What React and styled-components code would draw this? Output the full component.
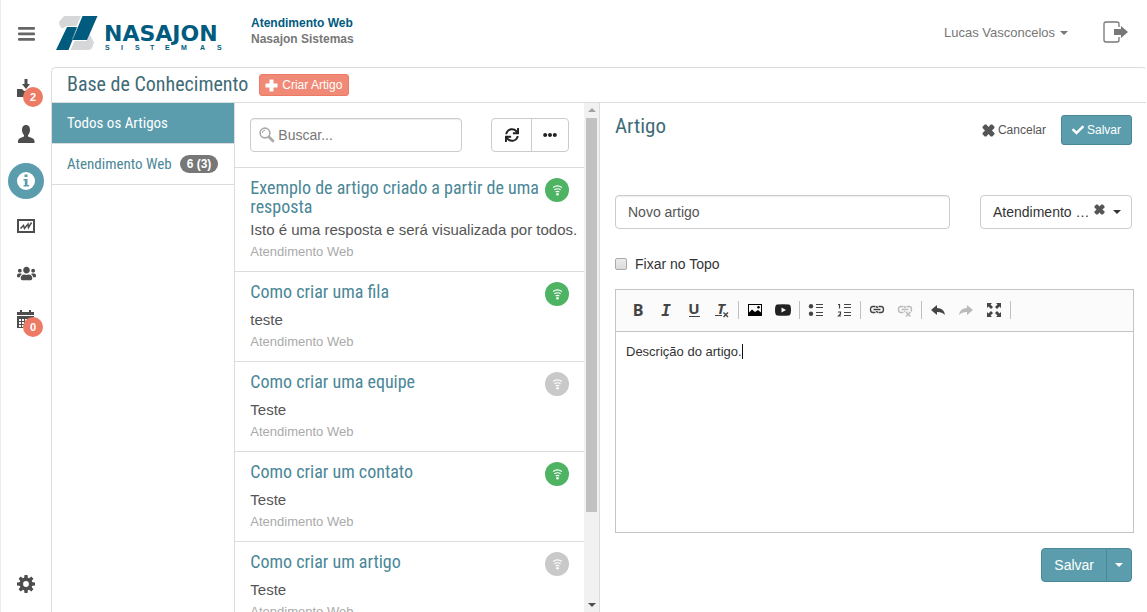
import React from "react";
import styled, { createGlobalStyle, css } from "styled-components";
import { FaCheck, FaSync, FaEllipsisH, FaUsers } from "react-icons/fa";

const teal = "#5b9dad";
const tealDark = "#4a8797";
const line = "#dcdcdc";
const coral = "#ec7a64";
const condensed = `"Roboto Condensed", "Liberation Sans Narrow", "Arial Narrow", Roboto, sans-serif`;

const GlobalStyle = createGlobalStyle`
  * { box-sizing: border-box; }
  body {
    margin: 0;
    background: #fff;
    color: #333;
    font-family: "Liberation Sans", Arial, sans-serif;
    font-size: 14px;
    line-height: 20px;
  }
  button, input, select, textarea { font: inherit; color: inherit; margin: 0; }
  button { cursor: pointer; }
  h1, h2, h3, p, ul { margin: 0; padding: 0; font-weight: 400; }
  ul { list-style: none; }
  a { color: inherit; text-decoration: none; }
  svg { display: block; flex: none; overflow: visible; }
`;

const Shell = styled.div`
  height: 100vh;
  display: flex;
  flex-direction: column;
  overflow: hidden;
  border-left: 1px solid #ececec;
`;

const Header = styled.header`
  flex: none;
  height: 67px;
  display: flex;
  align-items: center;
  padding: 0 19px 0 0;
`;

const PlainButton = styled.button`
  display: flex;
  align-items: center;
  justify-content: center;
  padding: 0;
  border: 0;
  background: none;
`;

const MenuButton = styled(PlainButton)`
  width: 50px;
  height: 40px;
  color: #666;
`;

const LogoLink = styled.a`
  margin: 0 25px 2px 5px;
`;

const Product = styled.div`
  margin-bottom: 5px;
  font-size: 12px;
  font-weight: 700;
  line-height: 16px;
  color: #777;
  strong { display: block; color: #005b7f; }
`;

const UserMenu = styled(PlainButton)`
  margin: 0 0 2px auto;
  gap: 5px;
  font-size: 13px;
  color: #777;
`;

const LogoutButton = styled(PlainButton)`
  margin: 0 0 4px 35px;
  color: #777;
`;

const Caret = styled.span`
  display: inline-block;
  border-top: 4px solid;
  border-left: 4px solid transparent;
  border-right: 4px solid transparent;
`;

const Body = styled.div`
  flex: 1;
  min-height: 0;
  display: flex;
`;

const Rail = styled.nav`
  width: 50px;
  flex: none;
  display: flex;
  flex-direction: column;
  align-items: center;
  gap: 10px;
  padding: 4px 0 10px;
`;

const RailLink = styled.a`
  position: relative;
  display: flex;
  align-items: center;
  justify-content: center;
  width: 36px;
  height: 36px;
  border-radius: 50%;
  color: ${(p) => (p.$active ? "#fff" : "#4d4d4d")};
  background: ${(p) => (p.$active ? teal : "none")};
  margin-top: ${(p) => (p.$last ? "auto" : "0")};
`;

const Badge = styled.span`
  position: absolute;
  left: 15px;
  top: 16px;
  width: 20px;
  height: 20px;
  border-radius: 50%;
  background: ${coral};
  color: #fff;
  font-size: 11px;
  font-weight: 700;
  text-align: center;
`;

const Panel = styled.main`
  flex: 1;
  min-width: 0;
  display: flex;
  flex-direction: column;
  border: 1px solid ${line};
  border-right-color: transparent;
  border-bottom: 0;
  border-radius: 5px 5px 0 0;
`;

const TitleBar = styled.div`
  height: 35px;
  flex: none;
  display: flex;
  align-items: center;
  gap: 11px;
  padding-left: 15px;
  border-bottom: 1px solid ${line};
`;

const Heading = styled.h1`
  padding-bottom: 2px;
  font-family: ${condensed};
  font-size: 20px;
  line-height: 22px;
  color: #3f6b78;
`;

const CreateButton = styled.button`
  display: flex;
  align-items: center;
  gap: 4px;
  height: 22px;
  padding: 0 6px 0 5px;
  border: 1px solid ${coral};
  border-radius: 3px;
  background: #f08a76;
  color: #fff;
  font-size: 12px;
`;

const Columns = styled.div`
  flex: 1;
  min-height: 0;
  display: grid;
  grid-template-columns: 2fr 4fr 6fr;
`;

const CategoryLink = styled.a`
  display: flex;
  align-items: center;
  gap: 8px;
  height: 41px;
  padding-left: 15px;
  border-bottom: 1px solid ${line};
  font-family: ${condensed};
  font-size: 15px;
  color: ${(p) => (p.$active ? "#fff" : tealDark)};
  background: ${(p) => (p.$active ? teal : "none")};
`;

const Count = styled.span`
  padding: 0 7px;
  border-radius: 9px;
  background: #777;
  color: #fff;
  font-family: "Liberation Sans", Arial, sans-serif;
  font-size: 12px;
  font-weight: 700;
  line-height: 18px;
`;

const ListColumn = styled.section`
  min-width: 0;
  min-height: 0;
  display: flex;
  border-left: 1px solid ${line};
`;

const ListContent = styled.div`
  flex: 1;
  min-width: 0;
  overflow: hidden;
`;

const ScrollTrack = styled.div`
  width: 15px;
  flex: none;
  display: flex;
  flex-direction: column;
  align-items: center;
  justify-content: space-between;
  padding: 5px 0;
  background: #f1f1f1;
`;

const ScrollArrow = styled.span`
  border: 4px solid transparent;
  border-top-width: ${(p) => (p.$up ? "0" : "4px")};
  border-bottom-width: ${(p) => (p.$up ? "4px" : "0")};
  border-bottom-color: ${(p) => (p.$up ? "#a3a3a3" : "transparent")};
  border-top-color: ${(p) => (p.$up ? "transparent" : "#505050")};
`;

const ScrollThumb = styled.span`
  width: 11px;
  height: 79%;
  margin: 6px 0 auto;
  background: #c1c1c1;
`;

const SearchRow = styled.div`
  display: flex;
  justify-content: space-between;
  gap: 29px;
  padding: 15px 15px;
  border-bottom: 1px solid ${line};
`;

const fieldStyle = css`
  height: 34px;
  border: 1px solid #ccc;
  border-radius: 4px;
  background: #fff;
`;

const SearchField = styled.label`
  ${fieldStyle}
  flex: 1;
  min-width: 0;
  display: flex;
  align-items: center;
  gap: 3px;
  padding-left: 8px;
  color: #aaa;
  box-shadow: inset 0 1px 1px rgba(0, 0, 0, 0.075);
  input {
    flex: 1;
    min-width: 0;
    padding: 0;
    border: 0;
    outline: 0;
    background: none;
    color: #555;
  }
  input::placeholder { color: #777; opacity: 1; }
`;

const ButtonGroup = styled.div`
  ${fieldStyle}
  display: flex;
  color: #222;
`;

const GroupButton = styled(PlainButton)`
  width: ${(p) => (p.$first ? "40px" : "36px")};
  border-right: ${(p) => (p.$first ? "1px solid #ccc" : "0")};
`;

const Article = styled.li`
  padding: 10px 15px 7px;
  border-bottom: 1px solid ${line};
`;

const ArticleTop = styled.div`
  display: flex;
  justify-content: space-between;
  gap: 4px;
  min-height: 24px;
  margin-bottom: 4px;
`;

const ArticleTitle = styled.h2`
  font-family: ${condensed};
  font-size: 18px;
  line-height: 19px;
  color: ${tealDark};
`;

const Status = styled.span`
  width: 24px;
  height: 24px;
  flex: none;
  display: flex;
  align-items: center;
  justify-content: center;
  border-radius: 50%;
  background: ${(p) => (p.$on ? "#4fb364" : "#c9c9c9")};
  color: #fff;
`;

const Excerpt = styled.p`
  font-size: 15px;
  color: #555;
  white-space: nowrap;
`;

const Source = styled.p`
  font-size: 13px;
  line-height: 24px;
  color: #aaa;
`;

const EditorColumn = styled.form`
  min-width: 0;
  padding: 12px 14px 0 15px;
  border-left: 1px solid ${line};
`;

const EditorHead = styled.div`
  display: flex;
  align-items: flex-start;
  justify-content: space-between;
  margin-bottom: 50px;
`;

const EditorHeading = styled(Heading)`
  font-size: 21px;
`;

const Actions = styled.div`
  display: flex;
  gap: 15px;
`;

const CancelButton = styled(PlainButton)`
  gap: 3px;
  font-size: 12px;
  color: #555;
`;

const primary = css`
  border: 1px solid ${tealDark};
  background: ${teal};
  color: #fff;
`;

const SaveButton = styled.button`
  ${primary}
  display: flex;
  align-items: center;
  gap: 3px;
  height: 30px;
  padding: 0 10px;
  border-radius: 3px;
  font-size: 12px;
`;

const FieldRow = styled.div`
  display: grid;
  grid-template-columns: 1fr 152px;
  gap: 30px;
`;

const TitleInput = styled.input`
  ${fieldStyle}
  min-width: 0;
  padding: 0 12px;
  color: #555;
  box-shadow: inset 0 1px 1px rgba(0, 0, 0, 0.075);
`;

const SelectWrap = styled.div`
  position: relative;
  select {
    ${fieldStyle}
    appearance: none;
    width: 100%;
    padding: 0 12px;
  }
`;

const ClearButton = styled(PlainButton)`
  position: absolute;
  right: 27px;
  top: 9px;
  color: #555;
`;

const SelectCaret = styled(Caret)`
  position: absolute;
  right: 11px;
  top: 15px;
  pointer-events: none;
`;

const CheckLabel = styled.label`
  display: flex;
  align-items: center;
  gap: 8px;
  margin: 25px 0 15px;
  input {
    appearance: none;
    width: 12px;
    height: 12px;
    border: 1px solid #aaa;
    border-radius: 2px;
    background: linear-gradient(#ececec, #dadada);
  }
`;

const Editor = styled.div`
  margin-right: -2px;
  border: 1px solid #c4c4c4;
`;

const Toolbar = styled.div`
  height: 42px;
  display: flex;
  align-items: center;
  padding: 0 0 2px 8px;
  border-bottom: 1px solid #c4c4c4;
  background: #fbfbfb;
`;

const Tool = styled(PlainButton)`
  width: 28px;
  height: 26px;
  color: #444;
  opacity: ${(p) => (p.disabled ? 0.35 : 1)};
`;

const Divider = styled.span`
  width: 1px;
  height: 18px;
  margin: 0 2px;
  background: #c0c0c0;
`;

const Writing = styled.div`
  position: relative;
  textarea {
    display: block;
    width: 100%;
    height: 200px;
    padding: 10px;
    border: 0;
    outline: 0;
    resize: none;
    font-size: 13px;
  }
`;

const TextCursor = styled.span`
  position: absolute;
  left: 126px;
  top: 12px;
  width: 1px;
  height: 15px;
  background: #111;
`;

const Footer = styled.div`
  display: flex;
  justify-content: flex-end;
  margin-top: 15px;
`;

const SplitButton = styled.button`
  ${primary}
  height: 34px;
  padding: 0 12px;
  border-radius: 4px 0 0 4px;
`;

const SplitToggle = styled.button`
  ${primary}
  display: flex;
  align-items: center;
  height: 34px;
  padding: 0 8px;
  margin-left: -1px;
  border-radius: 0 4px 4px 0;
`;

const Logo = () => (
  <svg width="170" height="34" viewBox="0 0 170 34" aria-label="Nasajon Sistemas">
    <path d="M8 0H25L20.500 10H10.500L6.500 12.500Q3 10.500 3 6Z M33.500 18L38 26.500L36 32Q35 34 32 34H14.500L18.500 25H30.500Z" fill="#d5d7d8" />
    <path d="M11 11H21L16.500 24L12.500 34H0Z M26.500 0H41.500L31 24H16.500Z" fill="#005b7f" />
    <path d="M21.300 11.500L16.300 23.500" stroke="#7fa9ba" strokeWidth="0.800" />
    <text x="48" y="25" fontFamily="DejaVu Sans" fontWeight="700" fontSize="22" fill="#005b7f">NASAJON</text>
    <text x="49 65 79 94 109 125 144 161" y="34" fontFamily="Liberation Sans" fontWeight="700" fontSize="7" fill="#005b7f">SISTEMAS</text>
  </svg>
);

const icon = (w, h, children, size = {}) => (
  <svg width={size.w || w} height={size.h || h} viewBox={`0 0 ${w} ${h}`} fill="currentColor" aria-hidden="true">{children}</svg>
);

const MenuIcon = () => icon(17, 14, <><rect width="17" height="2.800" rx="1" /><rect y="5.500" width="17" height="2.800" rx="1" /><rect y="11" width="17" height="2.800" rx="1" /></>);
const PlusIcon = () => icon(13, 13, <path d="M4.500 1Q4.500 0.500 5 0.500H8Q8.500 0.500 8.500 1V4.500H12Q12.500 4.500 12.500 5V8Q12.500 8.500 12 8.500H8.500V12Q8.500 12.500 8 12.500H5Q4.500 12.500 4.500 12V8.500H1Q0.500 8.500 0.500 8V5Q0.500 4.500 1 4.500H4.500Z" />);
const LogoutIcon = () => icon(25, 22, <>
  <path d="M16 6V3Q16 1 14 1H3Q1 1 1 3V19Q1 21 3 21H14Q16 21 16 19V16" fill="none" stroke="currentColor" strokeWidth="1.300" />
  <path d="M11 8H18V5L25 11L18 17V14H11Z" />
</>);
const InboxIcon = () => icon(18, 20, <path d="M7.500 0H10.500V5H13L9 10L5 5H7.500Z M0 10H5L7 12H11L13 10H18V18H0Z" />);
const UserIcon = () => icon(18, 20, <path d="M9 0C12 0 13 2.500 13 5C13 7.500 12 9 11 10V11.500L15.500 13.300Q17.500 14.200 17.500 16V18H1V16Q1 14.200 2.700 13.300L7 11.500V10C6 9 5 7.500 5 5C5 2.500 6 0 9 0Z" />);
const InfoIcon = () => icon(18, 18, <>
  <circle cx="9" cy="9" r="9" />
  <path d="M7.500 2.500H10.500V5H7.500Z M6.500 7H10.500V13H12V14.500H6.500V13H7.800V8.500H6.500Z" fill={teal} />
</>);
const ChartIcon = () => icon(18, 16, <>
  <path fillRule="evenodd" d="M0 0H18V14H0Z M2 2V12H16V2Z" />
  <path d="M3.500 9.500L6.500 6.500L7.500 9.500L11 5L11.500 8.500L14.500 3.500" fill="none" stroke="currentColor" strokeWidth="1.500" />
</>);
const CalendarIcon = () => icon(18, 18, <>
  <path d="M3 0H5V2H12V0H14V2H17V5H0V2H3Z" />
  <path fillRule="evenodd" d="M0 6H17V18H0Z M2 9V11H4V9Z M5 9V11H7V9Z M8 9V11H10V9Z M11 9V11H13V9Z M14 9V11H16V9Z M2 12V14H4V12Z M5 12V14H7V12Z M8 12V14H10V12Z M2 15V17H4V15Z M5 15V17H7V15Z" />
</>);
const CogIcon = () => icon(18, 18, <>
  <circle cx="9" cy="9" r="4.700" fill="none" stroke="currentColor" strokeWidth="3.600" />
  {[0, 45, 90, 135].map((a) => <path key={a} d="M7.500 0H10.500L11 4H7Z M7.500 18H10.500L11 14H7Z" transform={`rotate(${a} 9 9)`} />)}
</>);
const SearchIcon = () => icon(16, 16, <>
  <circle cx="6" cy="6" r="4.900" fill="none" stroke="currentColor" strokeWidth="1.600" />
  <path d="M3.300 6Q3.300 3.300 6 3.300" fill="none" stroke="currentColor" strokeWidth="1" />
  <path d="M10 10L14 14" stroke="currentColor" strokeWidth="2.800" strokeLinecap="round" />
</>);
const WifiIcon = () => icon(12, 12, <>
  <g fill="none" stroke="currentColor" strokeWidth="1.300">
    <path d="M1.200 2.600Q6 -0.500 10.800 2.600" /><path d="M2.600 5.200Q6 3 9.400 5.200" /><path d="M4 7.600Q6 6.300 8 7.600" />
  </g>
  <circle cx="6" cy="10" r="1.400" />
</>, { w: 11, h: 11 });
const CrossIcon = ({ size }) => icon(12, 12, <path d="M0.500 2.500L2.500 0.500H4L6 2.800L8 0.500H9.500L11.500 2.500V3.800L9.200 6L11.500 8.200V9.500L9.500 11.500H8L6 9.200L4 11.500H2.500L0.500 9.500V8.200L2.800 6L0.500 3.800Z" />, { w: size, h: size });

const tool = (children) => icon(16, 16, children);
const letter = (ch, props) => <text x="8" y="14" textAnchor="middle" fontFamily="Open Sans" fontWeight="700" fontSize="16" {...props}>{ch}</text>;
const bars = <path d="M8 2.500H15M8 5.500H15M8 10.500H15M8 13.500H15" stroke="currentColor" strokeWidth="1" />;
const chain = <path d="M6.500 4.500H4Q1.500 4.500 1.500 7.500Q1.500 10.500 4 10.500H6.500M9.500 4.500H12Q14.500 4.500 14.500 7.500Q14.500 10.500 12 10.500H9.500M4.500 7.500H11.500M7 4.500Q8.500 5 8.500 6M9 10.500Q7.500 10 7.500 9" fill="none" stroke="currentColor" strokeWidth="1.400" />;
const undoPath = "M1 8L7 3V6Q14 6 15 13Q12 9.800 7 10V13Z";

const toolGroups = [
  [
    ["Negrito", letter("B")],
    ["Itálico", letter("I", { fontFamily: "DejaVu Sans Mono", fontStyle: "italic" })],
    ["Sublinhado", <>{letter("U", { y: 12, fontSize: 15 })}<rect x="3" y="14" width="11" height="1" /></>],
    ["Remover formatação", <>{letter("T", { x: 7, y: 12, fontSize: 15, fontStyle: "italic" })}<path d="M1 13.500H8" stroke="currentColor" /><path d="M9.500 10.500L14 15M14 10.500L9.500 15" stroke="currentColor" strokeWidth="1.400" /></>],
  ],
  [
    ["Imagem", <><path fill="#000" fillRule="evenodd" d="M1 2H15V14H1Z M2 3V10.500L5 7.500L8 10L11 8L14 10.500V3Z" /><circle cx="11.500" cy="5.200" r="1.300" fill="#000" /></>],
    ["Vídeo", <path fill="#222" fillRule="evenodd" d="M2 2.500Q8 1.800 14 2.500Q16 2.700 16 8Q16 13.300 14 13.500Q8 14.200 2 13.500Q0 13.300 0 8Q0 2.700 2 2.500Z M6.500 5.500V10.500L11 8Z" />],
  ],
  [
    ["Lista", <><circle cx="3" cy="4.200" r="2.200" /><circle cx="3" cy="11.700" r="2.200" />{bars}</>],
    ["Lista numerada", <><path d="M2 2.500H3.500V6.500M2 10H4.500V12L2.500 14H5" fill="none" stroke="currentColor" strokeWidth="1.200" />{bars}</>],
  ],
  [
    ["Link", chain],
    ["Remover link", <>{chain}<path d="M8.500 9.500L14 15M14 9.500L8.500 15" stroke="#fbfbfb" strokeWidth="3" /><path d="M9 10L13.500 14.500M13.500 10L9 14.500" stroke="currentColor" strokeWidth="1.500" /></>, true],
  ],
  [
    ["Desfazer", <path d={undoPath} />],
    ["Refazer", <path d={undoPath} transform="translate(16 0) scale(-1 1)" />, true],
    ["Maximizar", <path d="M1 1H6L4.500 2.500L7 5L5 7L2.500 4.500L1 6Z M15 1V6L13.500 4.500L11 7L9 5L11.500 2.500L10 1Z M1 15V10L2.500 11.500L5 9L7 11L4.500 13.500L6 15Z M15 15H10L11.500 13.500L9 11L11 9L13.500 11.500L15 10Z" />],
  ],
];

const railItems = [
  { label: "Chamados", glyph: <InboxIcon />, badge: "2" },
  { label: "Clientes", glyph: <UserIcon /> },
  { label: "Base de Conhecimento", glyph: <InfoIcon />, active: true },
  { label: "Relatórios", glyph: <ChartIcon /> },
  { label: "Equipes", glyph: <FaUsers size={19} /> },
  { label: "Agenda", glyph: <CalendarIcon />, badge: "0" },
  { label: "Configurações", glyph: <CogIcon />, last: true },
];

const articles = [
  { title: "Exemplo de artigo criado a partir de uma resposta", text: "Isto é uma resposta e será visualizada por todos.", on: true },
  { title: "Como criar uma fila", text: "teste", on: true },
  { title: "Como criar uma equipe", text: "Teste", on: false },
  { title: "Como criar um contato", text: "Teste", on: true },
  { title: "Como criar um artigo", text: "Teste", on: false },
];

export default function App() {
  return (
    <>
      <GlobalStyle />
      <Shell>
        <Header>
          <MenuButton aria-label="Menu"><MenuIcon /></MenuButton>
          <LogoLink href="#"><Logo /></LogoLink>
          <Product><strong>Atendimento Web</strong>Nasajon Sistemas</Product>
          <UserMenu>Lucas Vasconcelos <Caret /></UserMenu>
          <LogoutButton aria-label="Sair"><LogoutIcon /></LogoutButton>
        </Header>
        <Body>
          <Rail>
            {railItems.map((r) => (
              <RailLink key={r.label} href="#" aria-label={r.label} $active={r.active} $last={r.last}>
                {r.glyph}
                {r.badge && <Badge>{r.badge}</Badge>}
              </RailLink>
            ))}
          </Rail>
          <Panel>
            <TitleBar>
              <Heading>Base de Conhecimento</Heading>
              <CreateButton><PlusIcon />Criar Artigo</CreateButton>
            </TitleBar>
            <Columns>
              <nav>
                <CategoryLink href="#" $active>Todos os Artigos</CategoryLink>
                <CategoryLink href="#">Atendimento Web <Count>6 (3)</Count></CategoryLink>
              </nav>
              <ListColumn>
                <ListContent>
                  <SearchRow>
                    <SearchField>
                      <SearchIcon />
                      <input type="text" placeholder="Buscar..." aria-label="Buscar" />
                    </SearchField>
                    <ButtonGroup>
                      <GroupButton $first aria-label="Atualizar"><FaSync size={14} /></GroupButton>
                      <GroupButton aria-label="Mais opções"><FaEllipsisH size={14} /></GroupButton>
                    </ButtonGroup>
                  </SearchRow>
                  <ul>
                    {articles.map((a) => (
                      <Article key={a.title}>
                        <ArticleTop>
                          <ArticleTitle>{a.title}</ArticleTitle>
                          <Status $on={a.on}><WifiIcon /></Status>
                        </ArticleTop>
                        <Excerpt>{a.text}</Excerpt>
                        <Source>Atendimento Web</Source>
                      </Article>
                    ))}
                  </ul>
                </ListContent>
                <ScrollTrack><ScrollArrow $up /><ScrollThumb /><ScrollArrow /></ScrollTrack>
              </ListColumn>
              <EditorColumn onSubmit={(e) => e.preventDefault()}>
                <EditorHead>
                  <EditorHeading as="h2">Artigo</EditorHeading>
                  <Actions>
                    <CancelButton type="button"><CrossIcon size={13} />Cancelar</CancelButton>
                    <SaveButton><FaCheck size={12} />Salvar</SaveButton>
                  </Actions>
                </EditorHead>
                <FieldRow>
                  <TitleInput type="text" defaultValue="Novo artigo" aria-label="Título" />
                  <SelectWrap>
                    <select aria-label="Categoria"><option>Atendimento …</option></select>
                    <ClearButton type="button" aria-label="Limpar"><CrossIcon size={11} /></ClearButton>
                    <SelectCaret />
                  </SelectWrap>
                </FieldRow>
                <CheckLabel><input type="checkbox" />Fixar no Topo</CheckLabel>
                <Editor>
                  <Toolbar>
                    {toolGroups.map((group, i) => (
                      <React.Fragment key={i}>
                        {group.map(([label, glyph, off]) => (
                          <Tool key={label} type="button" aria-label={label} disabled={off}>{tool(glyph)}</Tool>
                        ))}
                        <Divider />
                      </React.Fragment>
                    ))}
                  </Toolbar>
                  <Writing>
                    <textarea aria-label="Descrição" defaultValue="Descrição do artigo." />
                    <TextCursor />
                  </Writing>
                </Editor>
                <Footer>
                  <SplitButton>Salvar</SplitButton>
                  <SplitToggle type="button" aria-label="Mais opções"><Caret /></SplitToggle>
                </Footer>
              </EditorColumn>
            </Columns>
          </Panel>
        </Body>
      </Shell>
    </>
  );
}
